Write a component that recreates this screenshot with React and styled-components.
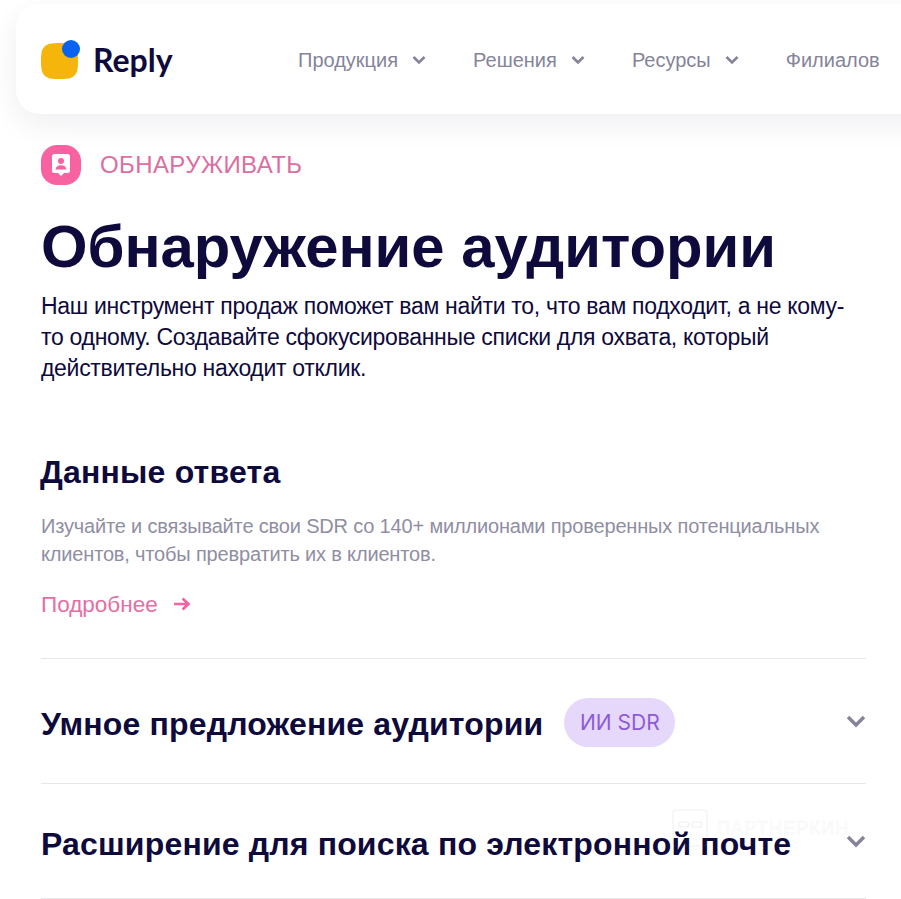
import React from 'react'
import styled, { createGlobalStyle } from 'styled-components'

const GlobalStyle = createGlobalStyle`
  html, body {
    margin: 0;
    padding: 0;
    background: #fff;
    overflow: hidden;
  }
  body {
    font-family: 'Liberation Sans', Arial, sans-serif;
  }
`

const Page = styled.div`
  position: relative;
  width: 901px;
  height: 899px;
  overflow: hidden;
  background: #fff;
`
const Header = styled.header`
  display: flex;
  align-items: center;
  box-sizing: border-box;
  width: 1000px;
  height: 110px;
  margin: 4px 0 0 16px;
  padding: 0 0 0 25px;
  background: #fff;
  border-radius: 24px;
  box-shadow: 0 10px 30px rgba(30, 30, 70, 0.07);
`
const Logo = styled.div`
  display: flex;
  align-items: center;
  gap: 13px;
  width: 257px;
`
const LogoText = styled.span`
  font-family: 'Lato', sans-serif;
  font-weight: 700;
  font-size: 32px;
  line-height: 40px;
  color: #0e0a3c;
  margin-top: 2px;
`
const Nav = styled.nav`
  display: flex;
  align-items: center;
  gap: 47px;
  margin-top: 2px;
`
const NavItem = styled.div`
  display: flex;
  align-items: center;
  gap: 14px;
  font-size: 20px;
  color: #85849a;
`
const Main = styled.main`
  padding: 31px 35px 0 41px;
`
const Eyebrow = styled.div`
  display: flex;
  align-items: center;
  gap: 19px;
  height: 40px;
`
const EyebrowBadge = styled.div`
  display: flex;
  align-items: center;
  justify-content: center;
  width: 40px;
  height: 40px;
  border-radius: 16px;
  background: #f862a0;
`
const EyebrowText = styled.span`
  font-size: 24px;
  letter-spacing: 0.4px;
  color: #dd6e9f;
`
const Title = styled.h1`
  margin: 26px 0 0;
  font-size: 59.8px;
  line-height: 72px;
  font-weight: 700;
  color: #0e0a3c;
  white-space: nowrap;
`
const Lead = styled.p`
  margin: 8px 0 0;
  font-size: 23px;
  line-height: 31px;
  color: #0e0a3c;
  letter-spacing: -0.3px;
  white-space: nowrap;
`
const SectionTitle = styled.h2`
  margin: 68px 0 0 -1px;
  font-size: 32px;
  line-height: 40px;
  font-weight: 700;
  letter-spacing: 0.2px;
  color: #0e0a3c;
`
const Description = styled.p`
  margin: 20px 0 0;
  font-size: 20px;
  line-height: 28px;
  letter-spacing: -0.17px;
  color: #8f8ea3;
  white-space: nowrap;
`
const MoreLink = styled.a`
  display: flex;
  align-items: center;
  gap: 16px;
  margin-top: 22px;
  font-size: 22.5px;
  line-height: 30px;
  color: #e56ea5;
`
const MoreArrow = styled.svg`
  width: 17px;
  height: 14px;
  margin-bottom: 3px;
  fill: none;
  stroke: #f862a0;
  stroke-width: 2.6;
`
const Row = styled.div`
  display: flex;
  align-items: center;
  justify-content: space-between;
  box-sizing: border-box;
  height: ${props => props.$height}px;
  border-top: 1px solid #e8e8ec;
  ${props => props.$first && 'margin-top: 38px;'}
  ${props => props.$last && 'border-bottom: 1px solid #e8e8ec;'}
`
const RowTitle = styled.div`
  display: flex;
  align-items: center;
  gap: 21px;
  font-size: 32px;
  font-weight: 700;
  letter-spacing: 0.17px;
  color: #0e0a3c;
  white-space: nowrap;
`
const RowLabel = styled.span`
  margin-top: 6px;
`
const Pill = styled.span`
  display: flex;
  align-items: center;
  justify-content: center;
  width: 111px;
  height: 49px;
  margin-top: 3px;
  border-radius: 25px;
  background: #e6d8fb;
  font-family: 'Inter', sans-serif;
  font-weight: 400;
  font-size: 21px;
  letter-spacing: 0;
  color: #8d5bd8;
`
const RowChevron = styled.svg`
  width: 20px;
  height: 13px;
  fill: none;
  stroke: #85849a;
  stroke-width: 3.4;
`
const Watermark = styled.div`
  position: absolute;
  left: 672px;
  top: 809px;
  display: flex;
  align-items: center;
  gap: 9px;
  opacity: 0.1;
`
const WatermarkText = styled.span`
  font-size: 18px;
  color: transparent;
  -webkit-text-stroke: 0.5px #85849a;
  letter-spacing: 1.2px;
`

const NavChevron = () => (
  <svg width="14" height="10" viewBox="0 0 14 10" fill="none" stroke="#85849a" strokeWidth="2.6">
    <path d="M1.5 2 7 7.500 12.500 2" />
  </svg>
)

const navItems = [
  { label: 'Продукция', menu: true },
  { label: 'Решения', menu: true },
  { label: 'Ресурсы', menu: true },
  { label: 'Филиалов', menu: false },
]

const App = () => {
  return (
    <Page>
      <GlobalStyle />
      <Header>
        <Logo>
          <svg width="39" height="39" viewBox="0 0 39 39">
            <path
              d="M18.500 3c7 0 12 .5 15 3.500S37 14 37 21c0 7-.5 11.500-3.500 14.500S26 39 18.500 39 6.500 38.500 3.500 35.500 0 28 0 21 .5 9.500 3.500 6.500 11.500 3 18.500 3z"
              fill="#f5b50a"
            />
            <circle cx="30" cy="9" r="9" fill="#0a63f0" />
          </svg>
          <LogoText>Reply</LogoText>
        </Logo>
        <Nav>
          {navItems.map(item => (
            <NavItem key={item.label}>
              {item.label}
              {item.menu && <NavChevron />}
            </NavItem>
          ))}
        </Nav>
      </Header>
      <Main>
        <Eyebrow>
          <EyebrowBadge>
            <svg width="18" height="22" viewBox="0 0 18 22">
              <path
                d="M2.500 0h13A2.500 2.500 0 0 1 18 2.500v14a2.500 2.500 0 0 1-2.500 2.500H12l-3 3-3-3H2.500A2.500 2.500 0 0 1 0 16.500v-14A2.500 2.500 0 0 1 2.500 0z"
                fill="#fff"
              />
              <circle cx="9" cy="7" r="3" fill="#f862a0" />
              <path d="M3.500 15.500c.4-3 2.500-4.200 5.500-4.200s5.100 1.200 5.500 4.200z" fill="#f862a0" />
            </svg>
          </EyebrowBadge>
          <EyebrowText>ОБНАРУЖИВАТЬ</EyebrowText>
        </Eyebrow>
        <Title>Обнаружение аудитории</Title>
        <Lead>
          Наш инструмент продаж поможет вам найти то, что вам подходит, а не кому-
          <br />
          то одному. Создавайте сфокусированные списки для охвата, который
          <br />
          действительно находит отклик.
        </Lead>
        <SectionTitle>Данные ответа</SectionTitle>
        <Description>
          Изучайте и связывайте свои SDR со 140+ миллионами проверенных потенциальных
          <br />
          клиентов, чтобы превратить их в клиентов.
        </Description>
        <MoreLink>
          Подробнее
          <MoreArrow viewBox="0 0 17 14">
            <path d="M0 7h14.500M8.500 1.500 14.500 7l-6 5.500" />
          </MoreArrow>
        </MoreLink>
        <Row $height={125} $first>
          <RowTitle>
            <RowLabel>Умное предложение аудитории</RowLabel>
            <Pill>ИИ SDR</Pill>
          </RowTitle>
          <RowChevron viewBox="0 0 20 13">
            <path d="M2 2l8 8 8-8" />
          </RowChevron>
        </Row>
        <Row $height={116} $last>
          <RowTitle>
            <RowLabel>Расширение для поиска по электронной почте</RowLabel>
          </RowTitle>
          <RowChevron viewBox="0 0 20 13">
            <path d="M2 2l8 8 8-8" />
          </RowChevron>
        </Row>
      </Main>
      <Watermark>
        <svg width="36" height="38" viewBox="0 0 36 38" fill="none" stroke="#85849a" strokeWidth="1.2">
          <rect x="1" y="1" width="34" height="36" rx="3" />
          <rect x="7" y="13" width="10" height="5" rx="2.500" />
          <rect x="20" y="13" width="10" height="5" rx="2.500" />
        </svg>
        <WatermarkText>ПАРТНЕРКИН</WatermarkText>
      </Watermark>
    </Page>
  )
}

export default App
